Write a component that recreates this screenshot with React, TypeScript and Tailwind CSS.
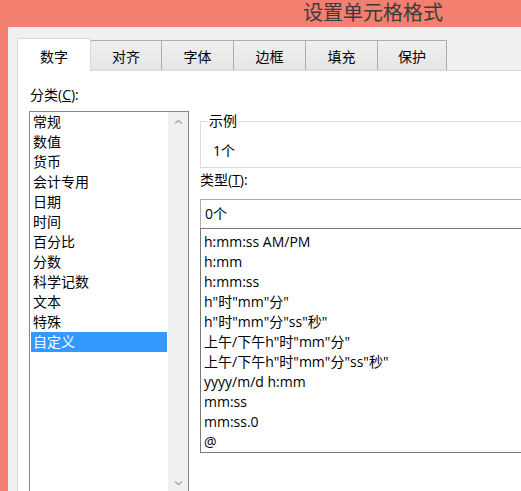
const categories = ['常规', '数值', '货币', '会计专用', '日期', '时间', '百分比', '分数', '科学记数', '文本', '特殊', '自定义'];

const formats = [
  'h:mm:ss AM/PM',
  'h:mm',
  'h:mm:ss',
  'h"时"mm"分"',
  'h"时"mm"分"ss"秒"',
  '上午/下午h"时"mm"分"',
  '上午/下午h"时"mm"分"ss"秒"',
  'yyyy/m/d h:mm',
  'mm:ss',
  'mm:ss.0',
  '@',
];

const tabs = [
  { label: '对齐', w: 'w-[71px]' },
  { label: '字体', w: 'w-[72px]' },
  { label: '边框', w: 'w-[72px]' },
  { label: '填充', w: 'w-[72px]' },
  { label: '保护', w: 'w-[69px]' },
];

function Chevron({ down }: { down?: boolean }) {
  return (
    <svg width="9" height="6" viewBox="0 0 9 6" className="block">
      <path
        d={down ? 'M1 1.5 L4.5 4.5 L8 1.5' : 'M1 4.5 L4.5 1.5 L8 4.5'}
        fill="none"
        stroke="#a8a8a8"
        strokeWidth="1.4"
      />
    </svg>
  );
}

export default function App() {
  return (
    <div
      className="w-[521px] h-[491px] overflow-hidden bg-[#f37f71] text-[14px] text-black"
      style={{ fontFamily: '"Open Sans", "Noto Sans CJK SC", sans-serif' }}
    >
      {/* title bar */}
      <div className="h-[27px] pl-[303px] text-[20px] leading-[25px] text-[#3b3b3b] whitespace-nowrap">
        设置单元格格式
      </div>

      <div className="ml-[8px] w-[700px] h-[464px] bg-[#f0f0f0] pl-[9px] pt-[11px]">
        {/* tabs */}
        <div className="flex items-end h-[32px] relative z-10">
          <div className="w-[74px] h-[33px] -mb-px bg-white border-x border-t border-[#d9d9d9] flex items-center justify-center leading-[20px] pt-[3px]">
            数字
          </div>
          {tabs.map((t) => (
            <div
              key={t.label}
              className={`${t.w} h-[30px] border-t border-r border-[#acacac] bg-gradient-to-b from-[#f0f0f0] to-[#e5e5e5] flex items-center justify-center leading-[20px] pt-[2px]`}
            >
              {t.label}
            </div>
          ))}
        </div>

        {/* panel */}
        <div className="w-[640px] h-[430px] bg-white border border-[#d9d9d9] flex pl-[11px]">
          {/* left column */}
          <div className="w-[160px] shrink-0">
            <div className="mt-[15px] leading-[18px] pl-[1px]">
              分类(<span className="underline">C</span>):
            </div>
            <div className="mt-[7px] h-[383px] border border-[#828790] flex">
              <div className="w-[138px] px-[1px]">
                {categories.map((c) => (
                  <div
                    key={c}
                    className={`h-[20px] leading-[20px] pl-[2px] whitespace-nowrap ${
                      c === '自定义' ? 'bg-[#3399ff] text-white' : ''
                    }`}
                  >
                    {c}
                  </div>
                ))}
              </div>
              <div className="w-[20px] bg-[#f0f0f0] flex flex-col justify-between">
                <div className="h-[20px] flex items-center justify-center">
                  <Chevron />
                </div>
                <div className="h-[20px] flex items-center justify-center">
                  <Chevron down />
                </div>
              </div>
            </div>
          </div>

          {/* right column */}
          <div className="ml-[11px] flex-1">
            <fieldset className="mt-[41px] border border-[#dcdcdc]">
              <legend className="ml-[6px] px-[2px] leading-[18px]">示例</legend>
              <div className="pt-[11px] pb-[6px] pl-[12px] leading-[20px]">1个</div>
            </fieldset>
            <div className="mt-[2px] leading-[20px]">
              类型(<span className="underline">T</span>):
            </div>
            <div className="mt-[9px] h-[29px] border-x border-t border-[#adadad] pl-[4px] leading-[27px]">
              0个
            </div>
            <div className="h-[225px] border border-[#7a7a7a] pt-[3px] pl-[3px]">
              {formats.map((f) => (
                <div key={f} className="h-[20px] leading-[20px] whitespace-nowrap">
                  {f}
                </div>
              ))}
            </div>
          </div>
        </div>
      </div>
    </div>
  );
}
